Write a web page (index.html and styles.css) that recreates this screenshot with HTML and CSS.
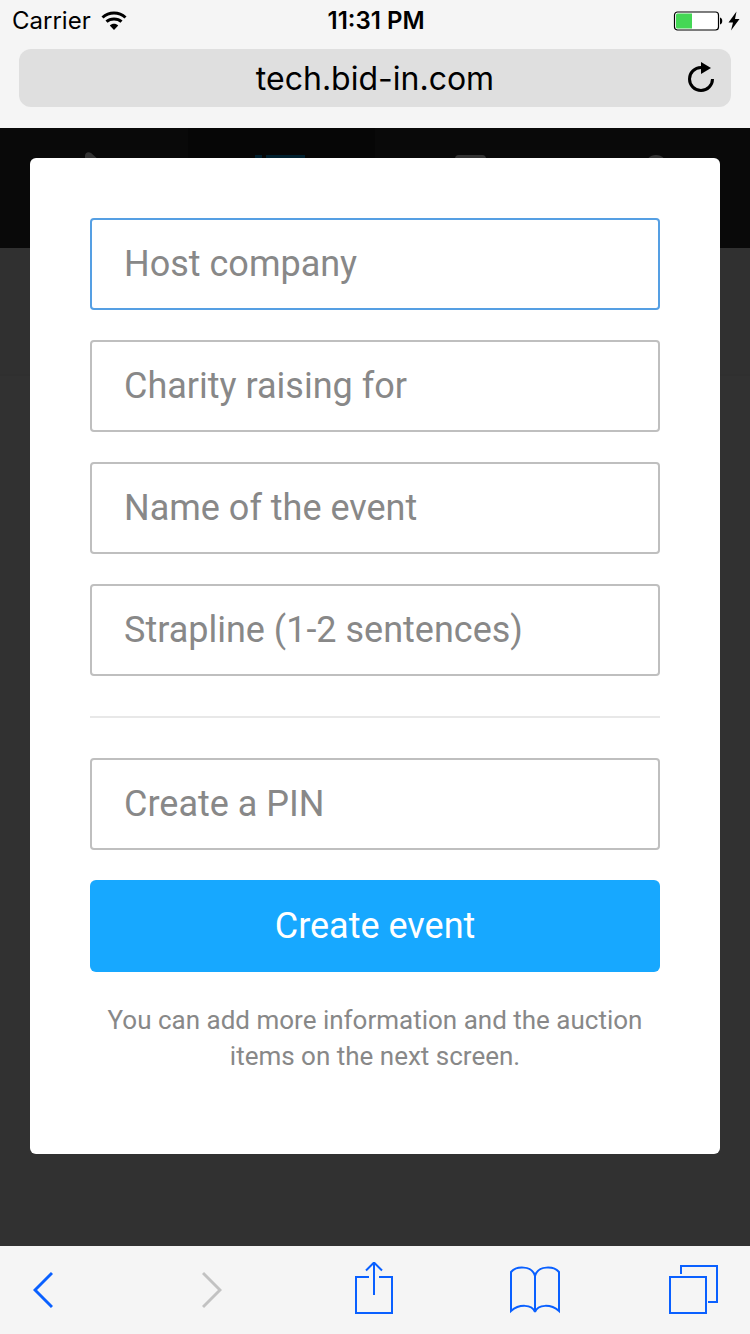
FILE: index.html
```html
<!doctype html>
<html lang="en">
    <head>
        <meta charset="utf-8">
        <meta name="viewport" content="width=device-width, initial-scale=1.0">
        <title>Create event | Bid-in</title>
        <link rel="stylesheet" href="styles.css">
    </head>
    <body>
        <header class="browser">
            <div class="status">
                <div class="carrier">
                    <span>Carrier</span>
                    <svg width="26" height="20" viewBox="0 0 26 20" aria-hidden="true">
                        <g fill="none" stroke="#000" stroke-width="3">
                            <path d="M1.500 6.500C8 .5 18 .5 24.500 6.500"/>
                            <path d="M5.500 10.700C9.500 7 16.500 7 20.500 10.700"/>
                        </g>
                        <path d="M13 19l-4.200-4.500c2.300-2.300 6.100-2.300 8.400 0z"/>
                    </svg>
                </div>
                <time class="clock">11:31 PM</time>
                <div class="power">
                    <svg width="50" height="20" viewBox="0 0 50 20" aria-hidden="true">
                        <rect x="1.500" y="1" width="44" height="18" rx="3" fill="#fff" stroke="#000" stroke-width="1.200"/>
                        <path fill="#44d755" d="M4.500 2.500H19v15H4.500a1.500 1.500 0 0 1-1.500-1.500V4a1.500 1.500 0 0 1 1.500-1.500z"/>
                        <path d="M47 6.500c3 .5 3 6.500 0 7z"/>
                    </svg>
                    <svg width="12" height="20" viewBox="0 0 12 20" aria-hidden="true">
                        <path d="M8.500.5L.5 11.500h4.500L3 19.500l8.500-11.500H7z"/>
                    </svg>
                </div>
            </div>
            <div class="address">
                <input type="text" aria-label="Address" value="tech.bid-in.com">
                <button type="button" aria-label="Reload">
                    <svg width="28" height="32" viewBox="0 0 28 32" aria-hidden="true">
                        <path d="M14 5.500A11.500 11.500 0 1 0 25.500 17" fill="none" stroke="#000" stroke-width="3"/>
                        <path d="M14 0l10 6-10 6z"/>
                    </svg>
                </button>
            </div>
        </header>
        <main class="page">
            <div class="site" aria-hidden="true">
                <div class="tabs">
                    <div class="tab">
                        <svg width="52" height="52" viewBox="0 0 52 52"><path d="M17 4c0-3 3-5 6-3l27 24-24 24-9-9z"/></svg>
                    </div>
                    <div class="tab active">
                        <svg width="52" height="52" viewBox="0 0 52 52"><path d="M0 3h7v7H0zM11 3h39v7H11zM0 19h7v7H0zM11 19h39v7H11zM0 35h7v7H0zM11 35h39v7H11z"/></svg>
                    </div>
                    <div class="tab">
                        <svg width="52" height="52" viewBox="0 0 52 52"><rect x="12" y="3" width="31" height="46" rx="4"/></svg>
                    </div>
                    <div class="tab">
                        <svg width="52" height="52" viewBox="0 0 52 52"><circle cx="26" cy="14" r="11"/><path d="M4 48c0-28 44-28 44 0z"/></svg>
                    </div>
                </div>
                <div class="heading"></div>
            </div>
            <div class="overlay">
                <form class="modal">
                    <input class="focused" type="text" name="host" placeholder="Host company" aria-label="Host company">
                    <input type="text" name="charity" placeholder="Charity raising for" aria-label="Charity raising for">
                    <input type="text" name="event" placeholder="Name of the event" aria-label="Name of the event">
                    <input type="text" name="strapline" placeholder="Strapline (1-2 sentences)" aria-label="Strapline (1-2 sentences)">
                    <hr>
                    <input type="text" name="pin" placeholder="Create a PIN" aria-label="Create a PIN">
                    <button type="submit">Create event</button>
                    <p>You can add more information and the auction items on the next screen.</p>
                </form>
            </div>
        </main>
        <footer class="toolbar">
            <button class="arrow" type="button" aria-label="Back">
                <svg width="20" height="52" viewBox="0 0 20 52" aria-hidden="true"><path d="M19 11L2 28l17 17" stroke-width="3"/></svg>
            </button>
            <button class="arrow" type="button" aria-label="Forward" disabled>
                <svg width="20" height="52" viewBox="0 0 20 52" aria-hidden="true"><path d="M1 11l17 17L1 45" stroke-width="3"/></svg>
            </button>
            <button type="button" aria-label="Share">
                <svg width="38" height="52" viewBox="0 0 38 52" aria-hidden="true"><path d="M14 15H1v36h36V15H24M19 33V1M11 8.500l8-8 8 8"/></svg>
            </button>
            <button type="button" aria-label="Bookmarks">
                <svg width="50" height="52" viewBox="0 0 50 52" aria-hidden="true"><path d="M25 14C22 3 6 4 1 10v39c8-7 21-7 24 1V14C28 3 44 4 49 10v39c-8-7-21-7-24 1"/></svg>
            </button>
            <button class="last" type="button" aria-label="Tabs">
                <svg width="49" height="52" viewBox="0 0 49 52" aria-hidden="true"><path d="M1 15h36v36H1zM12 12V4h36v36h-9"/></svg>
            </button>
        </footer>
    </body>
</html>
```
FILE: styles.css
```css
* {
    padding: 0;
    margin: 0;
    box-sizing: border-box;
}

body {
    min-height: 100vh;
    display: flex;
    flex-direction: column;
    font-family: Roboto, sans-serif;
    background: #f5f5f5;
}

svg {
    display: block;
}

button {
    border: none;
    background: none;
    cursor: pointer;
}

.browser {
    padding-bottom: 21px;
    font-family: Inter, sans-serif;
    color: #000;
}

.status {
    display: grid;
    grid-template-columns: 1fr auto 1fr;
    align-items: center;
    padding: 6px 10px 13px 12px;
    font-size: 24px;
    line-height: 30px;
}

.carrier,
.power {
    display: flex;
    align-items: center;
    gap: 10px;
}

.power {
    justify-content: flex-end;
    gap: 5px;
}

.clock {
    font-weight: 600;
}

.address {
    display: flex;
    align-items: center;
    margin: 0 19px;
    padding-left: 60px;
    height: 58px;
    border-radius: 12px;
    background: #dfdfdf;
}

.address input {
    flex: 1;
    min-width: 0;
    border: none;
    background: none;
    font-family: inherit;
    font-size: 32px;
    text-align: center;
    outline: none;
}

.address button {
    width: 60px;
    display: flex;
    justify-content: center;
}

/* the dimmed site and the modal share one grid cell */
.page {
    flex: 1;
    display: grid;
}

.site,
.overlay {
    grid-area: 1 / 1;
}

.tabs {
    display: grid;
    grid-template-columns: repeat(4, 1fr);
    height: 120px;
    background: #303030;
}

.tab {
    display: flex;
    justify-content: center;
    padding-top: 24px;
    fill: #fff;
}

.tab.active {
    background: #202020;
    fill: #00a0e8;
}

.heading {
    height: 128px;
    background: #f0f0f0;
    border-bottom: 2px solid #e8e8e8;
}

.overlay {
    z-index: 1;
    padding: 30px;
    background: rgba(0, 0, 0, 0.8);
}

.modal {
    display: flex;
    flex-direction: column;
    gap: 30px;
    padding: 60px 60px 80px;
    border-radius: 6px;
    background: #fff;
}

.modal input {
    width: 100%;
    height: 92px;
    padding: 0 32px;
    border: 2px solid #bfbfbf;
    border-radius: 4px;
    font-family: inherit;
    font-size: 36px;
    outline: none;
}

.modal input::placeholder {
    color: #888;
}

.modal input.focused {
    border-color: #559fe3;
}

.modal hr {
    margin: 10px 0;
    border: none;
    border-top: 2px solid #e8e8e8;
}

.modal button {
    height: 92px;
    border-radius: 6px;
    background: #17a8ff;
    color: #fff;
    font-family: inherit;
    font-size: 36px;
}

.modal p {
    color: #888;
    font-size: 26px;
    line-height: 36px;
    text-align: center;
}

.toolbar {
    display: flex;
    justify-content: space-between;
    align-items: flex-start;
    height: 88px;
    padding: 16px 32px 20px 9px;
}

.toolbar button {
    padding: 0 8px;
}

.toolbar .arrow {
    padding: 0 24px;
}

.toolbar .last {
    padding: 0;
}

.toolbar svg {
    fill: none;
    stroke: #0a60ff;
    stroke-width: 2;
}

.toolbar button:disabled svg {
    stroke: #c2c2c2;
}
```
